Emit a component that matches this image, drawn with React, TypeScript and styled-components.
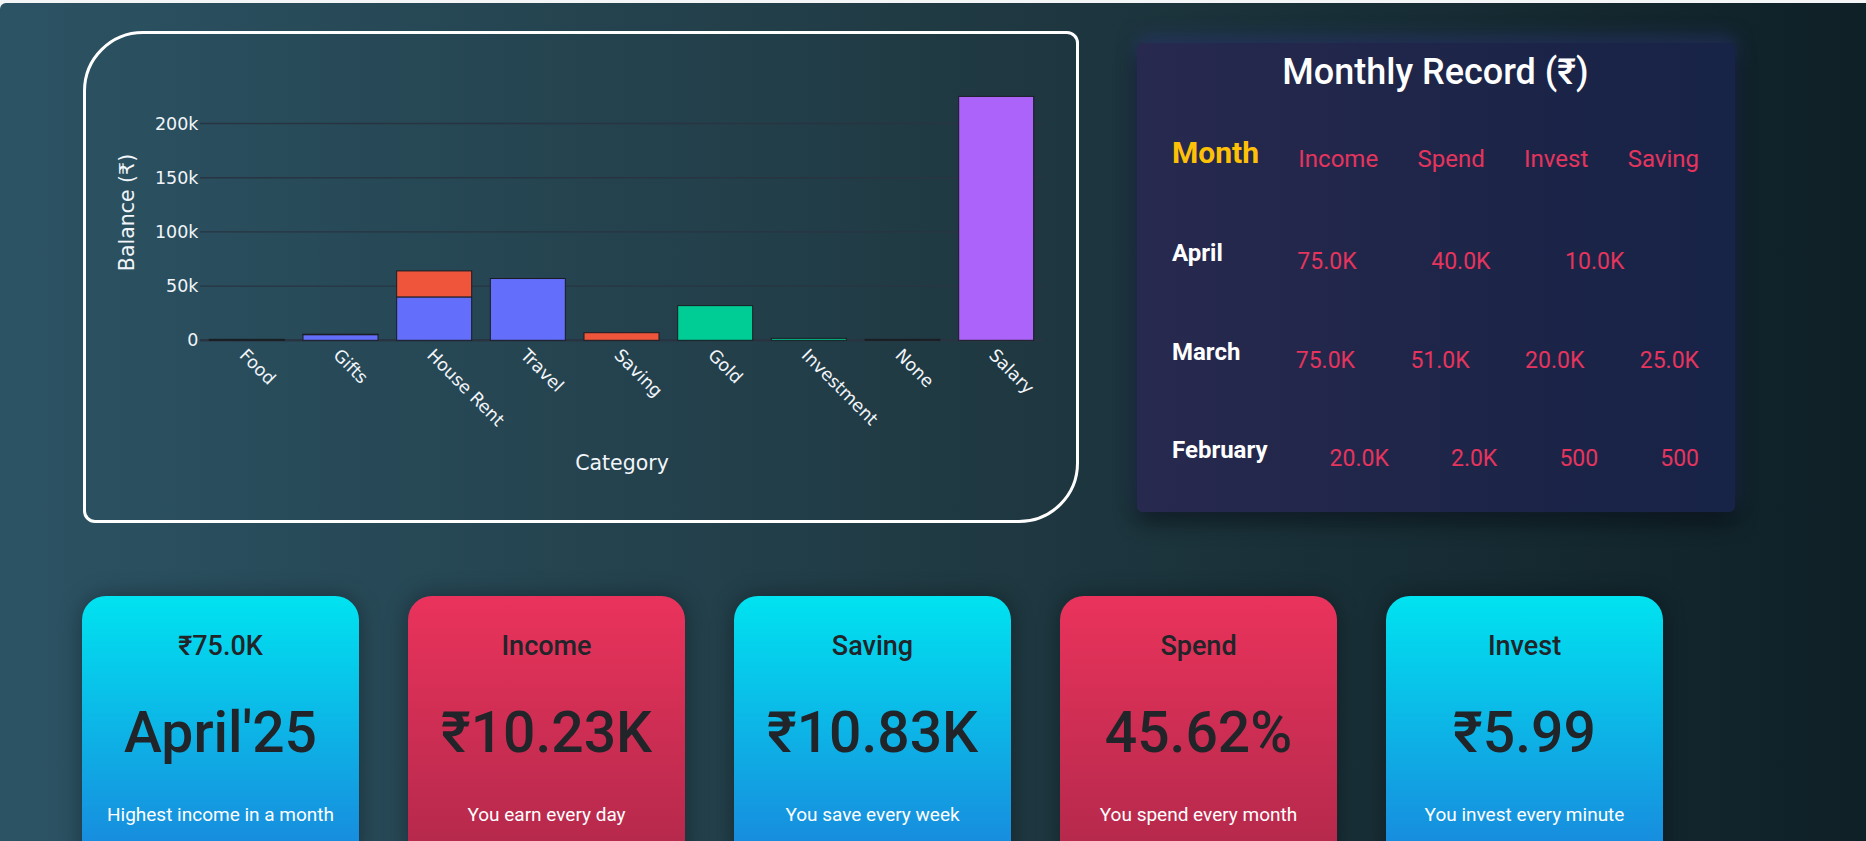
import React from "react";
import styled, { createGlobalStyle, css } from "styled-components";

const GlobalStyle = createGlobalStyle`
  html, body { margin: 0; padding: 0; background: #f4f5f6; }
  body { font-family: Roboto, "Noto Sans", "DejaVu Sans", sans-serif; overflow: hidden; }
  * { box-sizing: border-box; }
`;

const Page = styled.div`
  margin-top: 3px;
  min-height: 838px;
  height: 838px;
  overflow: hidden;
  border-top-left-radius: 6px;
  background: linear-gradient(to right, #2c5364 0%, #203a43 50%, #0f2027 100%);
  padding: 28px 0 0 82px;
`;

const TopRow = styled.div`
  display: flex;
  align-items: flex-start;
  gap: 58px;
`;

const ChartCard = styled.div`
  width: 996px;
  height: 492px;
  margin-left: 1px;
  border: 3px solid #ffffff;
  border-radius: 60px 12px 60px 12px;
  overflow: hidden;
`;

const ChartSvg = styled.svg`
  display: block;
  width: 990px;
  height: 486px;
  font-family: "DejaVu Sans", Verdana, sans-serif;
`;

const RecordCard = styled.div`
  width: 598px;
  height: 469px;
  margin-top: 12px;
  border-radius: 6px;
  padding: 8px 36px 0 35px;
  background: linear-gradient(90deg, #28294f 0%, #1d2548 55%, #172347 100%);
  box-shadow: 0 10px 22px rgba(0, 0, 0, 0.45), 0 -6px 18px rgba(48, 58, 125, 0.6);
  display: flex;
  flex-direction: column;
`;

const RecordTitle = styled.h2`
  margin: 0;
  text-align: center;
  color: #ffffff;
  font-size: 36px;
  font-weight: 500;
  line-height: 1.2;
`;

const RecordRow = styled.div<{ $gap: number }>`
  display: flex;
  justify-content: space-between;
  align-items: flex-start;
  margin-top: ${(p) => p.$gap}px;
`;

const MonthCell = styled.div<{ $header?: boolean }>`
  line-height: 1.2;
  font-weight: 700;
  ${(p) =>
    p.$header
      ? css`
          color: #ffc107;
          font-size: 30px;
        `
      : css`
          color: #ffffff;
          font-size: 24px;
        `}
`;

const ValueCell = styled.div<{ $header?: boolean }>`
  line-height: 1.2;
  color: #e5345d;
  font-size: ${(p) => (p.$header ? 24 : 23)}px;
  margin-top: ${(p) => (p.$header ? 10 : 9)}px;
  min-width: 0;
`;

const CardsRow = styled.div`
  display: flex;
  gap: 49px;
  margin-top: 73px;
`;

const StatCard = styled.div<{ $tone: "cyan" | "red" }>`
  width: 277px;
  height: 275px;
  flex: none;
  border-radius: 24px;
  padding-top: 34px;
  text-align: center;
  box-shadow: 0 0 22px rgba(0, 0, 0, 0.35);
  background: ${(p) =>
    p.$tone === "cyan"
      ? "linear-gradient(180deg, #00e3f0 0%, #1a83dc 100%)"
      : "linear-gradient(180deg, #ea335c 0%, #b0284a 100%)"};
`;

const StatTitle = styled.h3`
  margin: 0;
  font-size: 27px;
  font-weight: 500;
  line-height: 1.2;
  color: #212529;
`;

const StatValue = styled.div`
  margin-top: 37px;
  font-size: 57px;
  font-weight: 500;
  line-height: 1.2;
  color: #212529;
`;

const StatNote = styled.p`
  margin: 36px 0 0;
  font-size: 19px;
  line-height: 1.2;
  color: #ffffff;
`;

type Seg = { v: number; c: string };
const categories: { name: string; segs: Seg[] }[] = [
  { name: "Food", segs: [{ v: 0.9, c: "#1c1f24" }] },
  { name: "Gifts", segs: [{ v: 5.2, c: "#636efa" }, { v: 0.4, c: "#ef553b" }] },
  { name: "House Rent", segs: [{ v: 40, c: "#636efa" }, { v: 24, c: "#ef553b" }] },
  { name: "Travel", segs: [{ v: 57, c: "#636efa" }] },
  { name: "Saving", segs: [{ v: 7, c: "#ef553b" }] },
  { name: "Gold", segs: [{ v: 32, c: "#00cc96" }] },
  { name: "Investment", segs: [{ v: 1.8, c: "#00cc96" }] },
  { name: "None", segs: [{ v: 0.9, c: "#1c1f24" }] },
  { name: "Salary", segs: [{ v: 225, c: "#ab63fa" }] },
];

const X0 = 114;
const PW = 843;
const STEP = PW / categories.length;
const Y0 = 306.3;
const PER_K = 1.084;
const BAR_W = 75;

function BalanceChart() {
  const ticks = [0, 50, 100, 150, 200];
  return (
    <ChartSvg viewBox="0 0 990 486">
      {ticks.map((t) => {
        const y = Y0 - t * PER_K;
        return (
          <g key={t}>
            <line
              x1={X0}
              x2={X0 + PW}
              y1={y}
              y2={y}
              stroke="#283442"
              strokeWidth={t === 0 ? 2.5 : 1.4}
            />
            <text
              x={112.5}
              y={y}
              textAnchor="end"
              dominantBaseline="central"
              fill="#f2f5fa"
              fontSize={17.5}
            >
              {t === 0 ? "0" : `${t}k`}
            </text>
          </g>
        );
      })}
      {categories.map((cat, i) => {
        const cx = X0 + STEP * (i + 0.5);
        let base = Y0;
        return (
          <g key={cat.name}>
            {cat.segs.map((s, j) => {
              const h = s.v * PER_K;
              const y = base - h;
              base = y;
              return (
                <rect
                  key={j}
                  x={cx - BAR_W / 2}
                  y={y}
                  width={BAR_W}
                  height={h}
                  fill={s.c}
                  stroke="#1a1d22"
                  strokeWidth={1}
                />
              );
            })}
            <text
              x={cx - 4}
              y={318}
              transform={`rotate(45 ${cx - 4} 318)`}
              textAnchor="start"
              dominantBaseline="central"
              fill="#f2f5fa"
              fontSize={17.5}
            >
              {cat.name}
            </text>
          </g>
        );
      })}
      <text
        x={41}
        y={178.5}
        transform="rotate(-90 41 178.5)"
        textAnchor="middle"
        dominantBaseline="central"
        fill="#f2f5fa"
        fontSize={20.5}
      >
        Balance (₹)
      </text>
      <text x={536} y={436} textAnchor="middle" fill="#f2f5fa" fontSize={20.5}>
        Category
      </text>
    </ChartSvg>
  );
}

const records = [
  { month: "April", values: ["75.0K", "40.0K", "10.0K", ""] },
  { month: "March", values: ["75.0K", "51.0K", "20.0K", "25.0K"] },
  { month: "February", values: ["20.0K", "2.0K", "500", "500"] },
];

const stats: { tone: "cyan" | "red"; title: string; value: string; note: string }[] = [
  { tone: "cyan", title: "₹75.0K", value: "April'25", note: "Highest income in a month" },
  { tone: "red", title: "Income", value: "₹10.23K", note: "You earn every day" },
  { tone: "cyan", title: "Saving", value: "₹10.83K", note: "You save every week" },
  { tone: "red", title: "Spend", value: "45.62%", note: "You spend every month" },
  { tone: "cyan", title: "Invest", value: "₹5.99", note: "You invest every minute" },
];

export default function App() {
  return (
    <>
      <GlobalStyle />
      <Page>
        <TopRow>
          <ChartCard>
            <BalanceChart />
          </ChartCard>
          <RecordCard>
            <RecordTitle>Monthly Record (₹)</RecordTitle>
            <RecordRow $gap={41}>
              <MonthCell $header>Month</MonthCell>
              <ValueCell $header>Income</ValueCell>
              <ValueCell $header>Spend</ValueCell>
              <ValueCell $header>Invest</ValueCell>
              <ValueCell $header>Saving</ValueCell>
            </RecordRow>
            {records.map((r, i) => (
              <RecordRow key={r.month} $gap={i === 0 ? 65 : 62}>
                <MonthCell>{r.month}</MonthCell>
                {r.values.map((v, j) => (
                  <ValueCell key={j}>{v}</ValueCell>
                ))}
              </RecordRow>
            ))}
          </RecordCard>
        </TopRow>
        <CardsRow>
          {stats.map((s) => (
            <StatCard key={s.title} $tone={s.tone}>
              <StatTitle>{s.title}</StatTitle>
              <StatValue>{s.value}</StatValue>
              <StatNote>{s.note}</StatNote>
            </StatCard>
          ))}
        </CardsRow>
      </Page>
    </>
  );
}
